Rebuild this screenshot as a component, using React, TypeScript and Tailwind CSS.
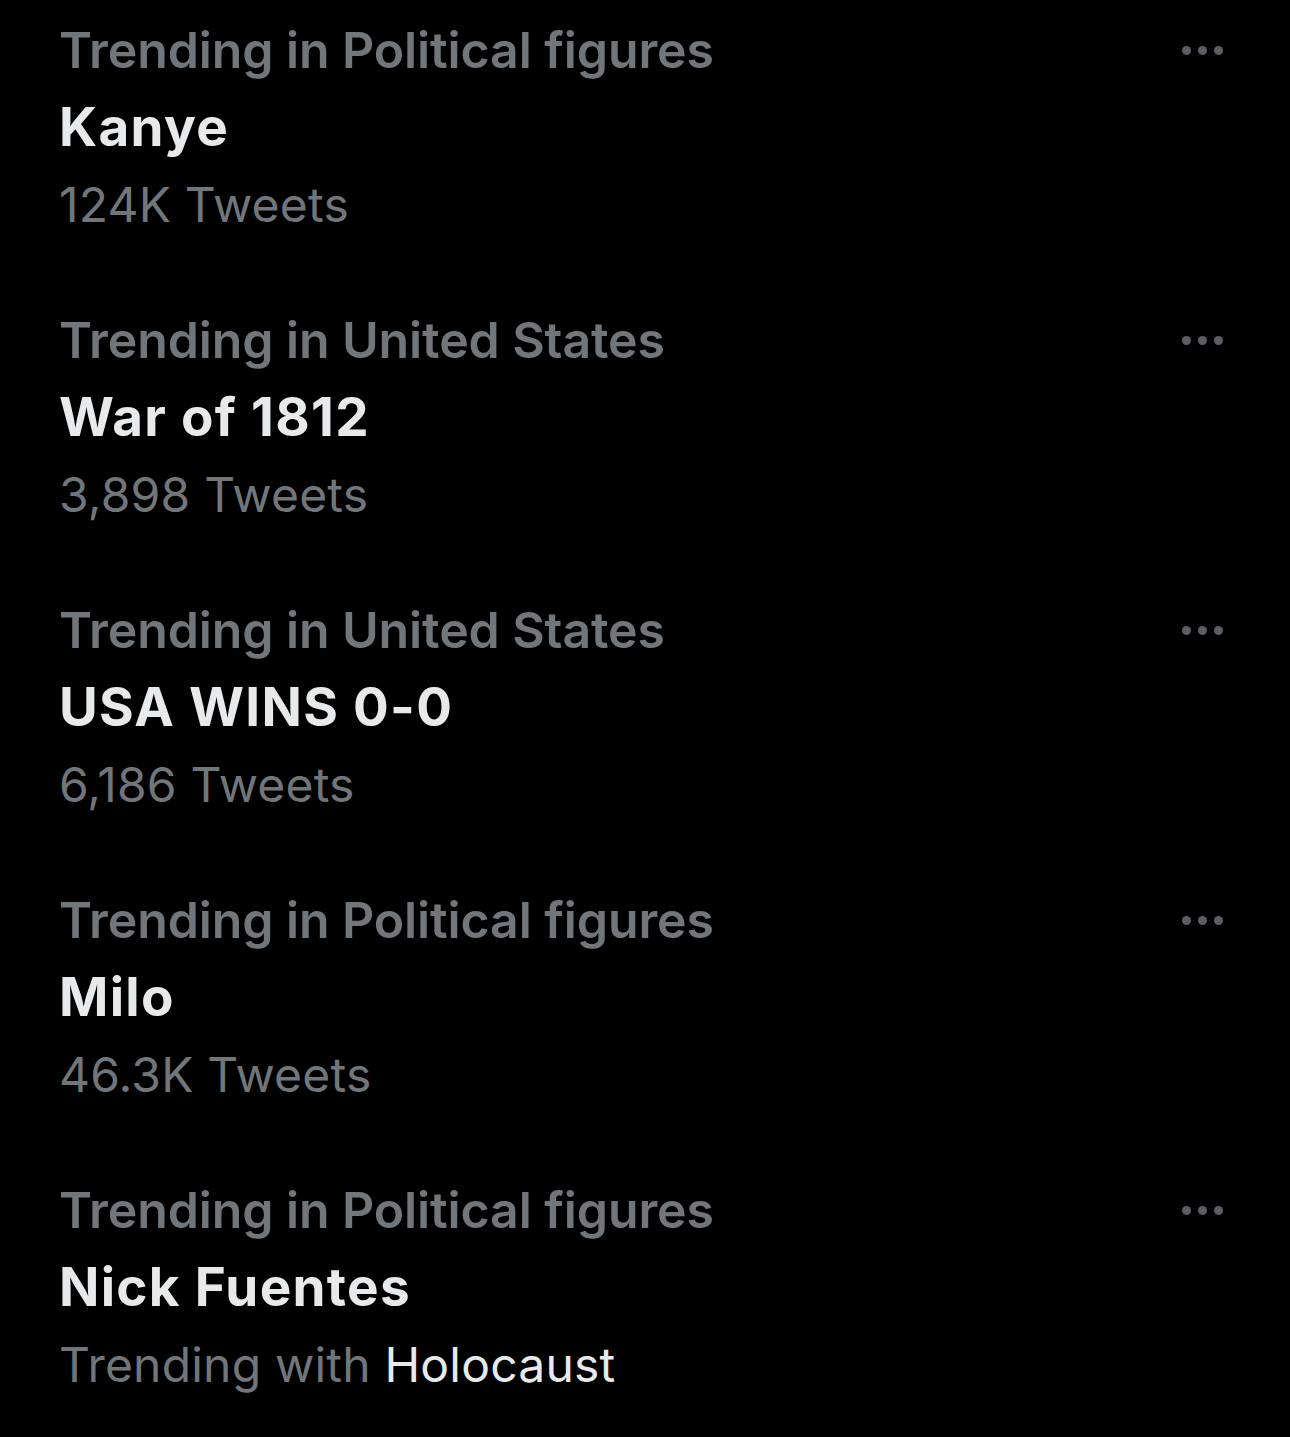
import React from "react";

const rows = [
  { cat: "Trending in Political figures", name: "Kanye", sub: "124K Tweets" },
  { cat: "Trending in United States", name: "War of 1812", sub: "3,898 Tweets" },
  { cat: "Trending in United States", name: "USA WINS 0-0", sub: "6,186 Tweets" },
  { cat: "Trending in Political figures", name: "Milo", sub: "46.3K Tweets" },
  { cat: "Trending in Political figures", name: "Nick Fuentes", sub: null },
];

function Dots() {
  return (
    <div className="flex gap-[7px] mt-[34px]">
      <span className="w-[9px] h-[9px] rounded-full bg-[#5b5e62]" />
      <span className="w-[9px] h-[9px] rounded-full bg-[#5b5e62]" />
      <span className="w-[9px] h-[9px] rounded-full bg-[#5b5e62]" />
    </div>
  );
}

export default function App() {
  return (
    <div
      className="w-[1290px] h-[1437px] bg-black pl-[59px] pr-[67px] pt-[12px] overflow-hidden"
      style={{ fontFamily: "Inter, 'Noto Sans', sans-serif" }}
    >
      {rows.map((r, i) => (
        <div key={i} className="flex justify-between h-[290px]">
          <div className="flex flex-col">
            <div className="h-[77px] leading-[77px] text-[50px] font-semibold text-[#71767b] tracking-[-0.1px] whitespace-nowrap">
              {r.cat}
            </div>
            <div className="h-[77px] leading-[77px] text-[53px] font-bold text-[#e7e9ea] tracking-[1.3px] whitespace-nowrap">
              {r.name}
            </div>
            <div className="h-[77px] leading-[77px] text-[48px] font-normal text-[#71767b] tracking-[0.2px] whitespace-nowrap">
              {r.sub ?? (
                <>
                  Trending with <span className="text-[#e7e9ea]">Holocaust</span>
                </>
              )}
            </div>
          </div>
          <Dots />
        </div>
      ))}
    </div>
  );
}
